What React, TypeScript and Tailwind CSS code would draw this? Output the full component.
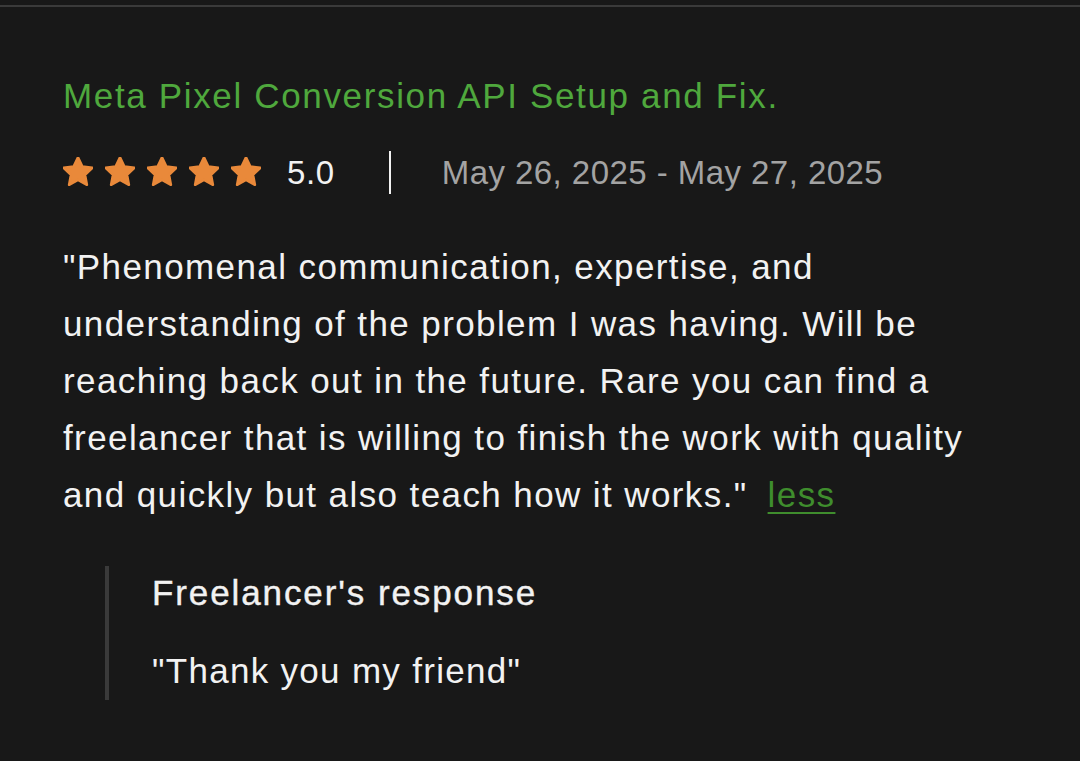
import React from "react";

function Star() {
  return (
    <svg width="30" height="30" viewBox="2.4 2.6 19.2 19.2" className="block">
      <path
        d="M12 2.8l2.8 5.9 6.4.8-4.7 4.5 1.2 6.4L12 17.3l-5.7 3.1 1.2-6.4-4.7-4.5 6.4-.8z"
        fill="#e9893a"
        stroke="#e9893a"
        strokeWidth="1.6"
        strokeLinejoin="round"
      />
    </svg>
  );
}

export default function App() {
  return (
    <div className="min-h-screen bg-[#181818] font-['Liberation_Sans',Arial,sans-serif]">
      <div className="pt-[5px]">
        <div className="h-[2px] bg-[#3a3a3a]" />
      </div>
      <div className="pl-[63px] pr-4">
        <h1 className="mt-[68px] text-[35px] leading-[42px] tracking-[1.65px] text-[#4fa83d] font-normal">
          Meta Pixel Conversion API Setup and Fix.
        </h1>
        <div className="mt-[33px] flex h-[44px] items-center">
          <div className="flex gap-[12px]">
            <Star />
            <Star />
            <Star />
            <Star />
            <Star />
          </div>
          <span className="ml-[26px] text-[33px] leading-none tracking-[0.6px] text-[#f2f2f2]">5.0</span>
          <div className="ml-[54px] h-[43px] w-[2px] bg-[#f2f2f2]" />
          <span className="ml-[51px] text-[33px] leading-none tracking-[0.45px] text-[#a3a3a3]">
            May 26, 2025 - May 27, 2025
          </span>
        </div>
        <p className="mt-[44px] max-w-[930px] text-[35px] leading-[57px] tracking-[1.4px] text-[#f2f2f2]">
          "Phenomenal communication, expertise, and understanding of the problem I was having. Will be
          reaching back out in the future. Rare you can find a freelancer that is willing to finish the
          work with quality and quickly but also teach how it works."
          <a className="ml-[20px] text-[#3f8d2d] underline decoration-2 underline-offset-[5px]">less</a>
        </p>
        <div className="ml-[42px] mt-[43px] border-l-4 border-[#3a3a3a] pl-[43px] pt-[5px] pb-[7px]">
          <div className="text-[35px] leading-[44px] tracking-[1.9px] text-[#f2f2f2] [-webkit-text-stroke:0.4px_#f2f2f2]">
            Freelancer's response
          </div>
          <div className="mt-[34px] text-[35px] leading-[44px] tracking-[1.3px] text-[#f2f2f2]">
            "Thank you my friend"
          </div>
        </div>
      </div>
    </div>
  );
}
